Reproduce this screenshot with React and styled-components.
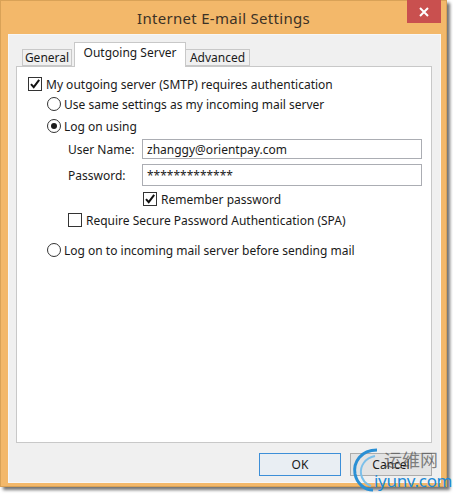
import React from "react";
import styled, { createGlobalStyle } from "styled-components";

const GlobalStyles = createGlobalStyle`
  * {
    box-sizing: border-box;
  }
  body {
    margin: 0;
    background: #ffffff;
    font-family: "Noto Sans", "Open Sans", sans-serif;
    font-size: 12px;
    color: #1a1a1a;
  }
`;

const Page = styled.div`
  position: relative;
  width: 453px;
  height: 498px;
`;

const Window = styled.div`
  display: flex;
  flex-direction: column;
  width: 447px;
  height: 487px;
  background: #f3b86a;
  border: 1px solid #d9a257;
  box-shadow: 3px 3px 3px rgba(0, 0, 0, 0.55);
`;

const TitleBar = styled.div`
  position: relative;
  height: 33px;
  display: flex;
  align-items: center;
  justify-content: center;
  font-size: 15px;
  color: #3c3226;
  letter-spacing: 0.3px;
`;

const CloseBtn = styled.div`
  position: absolute;
  top: -1px;
  right: 5px;
  width: 34px;
  height: 23px;
  background: #c9504f;
  display: flex;
  align-items: center;
  justify-content: center;
`;

const Client = styled.div`
  flex: 1;
  margin: 0 5px 3px 7px;
  background: #f0f0f0;
  border: 1px solid #f7f7f7;
  padding: 7px 8px 0 7px;
  display: flex;
  flex-direction: column;
`;

const TabStrip = styled.div`
  display: flex;
  align-items: flex-end;
  height: 24px;
  padding-left: 6px;
  position: relative;
  z-index: 1;
`;

const Tab = styled.div`
  width: ${(p) => p.$w}px;
  height: ${(p) => (p.$active ? "25px" : "17px")};
  margin: ${(p) => p.$m || "0"};
  margin-bottom: ${(p) => (p.$active ? "-1px" : "0")};
  background: ${(p) => (p.$active ? "#ffffff" : "#f0f0f0")};
  border: 1px solid #c8c8c8;
  border-bottom: ${(p) => (p.$active ? "none" : "1px solid #c8c8c8")};
  display: flex;
  justify-content: center;
  align-items: ${(p) => (p.$active ? "flex-start" : "center")};
  padding-top: ${(p) => (p.$active ? "2px" : "0")};
  line-height: 16px;
  position: relative;
  z-index: ${(p) => (p.$active ? 2 : 1)};
`;

const Panel = styled.div`
  height: 377px;
  background: #ffffff;
  border: 1px solid #c8c8c8;
  padding: 7px 0 0 11px;
  display: flex;
  flex-direction: column;
`;

const Row = styled.div`
  display: flex;
  align-items: center;
  height: ${(p) => p.$h || 20}px;
  padding-left: ${(p) => p.$indent || 0}px;
  margin-top: ${(p) => p.$mt || 0}px;
  white-space: nowrap;
`;

const Box = styled.span`
  width: 14px;
  height: 14px;
  border: 1px solid #333333;
  background: #ffffff;
  margin-right: 4px;
  display: flex;
  align-items: center;
  justify-content: center;
  flex-shrink: 0;
`;

const Radio = styled.span`
  width: 14px;
  height: 14px;
  border: 1px solid #333333;
  border-radius: 50%;
  background: #ffffff;
  margin-right: 3px;
  display: flex;
  align-items: center;
  justify-content: center;
  flex-shrink: 0;

  &::after {
    content: "";
    display: ${(p) => (p.$on ? "block" : "none")};
    width: 6px;
    height: 6px;
    border-radius: 50%;
    background: #1a1a1a;
  }
`;

const FieldLabel = styled.span`
  width: 74px;
`;

const Field = styled.div`
  width: 280px;
  height: ${(p) => p.$h || 20}px;
  border: 1px solid #abadb3;
  background: #ffffff;
  padding: 0 4px;
  display: flex;
  align-items: center;
`;

const Footer = styled.div`
  display: flex;
  justify-content: flex-end;
  gap: 9px;
  padding: 10px 0 0;
`;

const Button = styled.div`
  width: 82px;
  height: 23px;
  border: 1px solid ${(p) => (p.$focus ? "#3d8fd8" : "#acacac")};
  background: ${(p) => (p.$focus ? "#e9eef3" : "#e3e3e3")};
  display: flex;
  align-items: center;
  justify-content: center;
`;

const Watermark = styled.div`
  position: absolute;
  left: 351px;
  top: 446px;
  width: 100px;
  height: 50px;
  pointer-events: none;
`;

const WmCn = styled.span`
  position: absolute;
  left: 33px;
  top: 2px;
  font-family: "Noto Sans CJK SC", sans-serif;
  font-size: 18px;
  line-height: 22px;
  color: rgba(80, 80, 80, 0.7);
`;

const WmUrl = styled.span`
  position: absolute;
  left: 23px;
  top: 25px;
  font-family: "Noto Sans", sans-serif;
  font-size: 17px;
  line-height: 20px;
  letter-spacing: -0.3px;
  color: #1c8ad6;
`;

const Check = () => (
  <svg width="12" height="12" viewBox="0 0 12 12">
    <path d="M2 6.2 L4.7 9.2 L10.2 1.8" fill="none" stroke="#111" strokeWidth="2" />
  </svg>
);

export default function App() {
  return (
    <Page>
      <GlobalStyles />
      <Window>
        <TitleBar>
          Internet E-mail Settings
          <CloseBtn>
            <svg width="10" height="10" viewBox="0 0 10 10">
              <path d="M1 1 L9 9 M9 1 L1 9" stroke="#fff" strokeWidth="2" />
            </svg>
          </CloseBtn>
        </TitleBar>
        <Client>
          <TabStrip>
            <Tab $w={50} $m="0 2px 0 0">General</Tab>
            <Tab $w={112} $active>Outgoing Server</Tab>
            <Tab $w={65} $m="0 0 0 -1px">Advanced</Tab>
          </TabStrip>
          <Panel>
            <Row>
              <Box>
                <Check />
              </Box>
              My outgoing server (SMTP) requires authentication
            </Row>
            <Row $indent={19}>
              <Radio />
              Use same settings as my incoming mail server
            </Row>
            <Row $indent={19} $h={24}>
              <Radio $on />
              Log on using
            </Row>
            <Row $indent={40} $h={22}>
              <FieldLabel>User Name:</FieldLabel>
              <Field>zhanggy@orientpay.com</Field>
            </Row>
            <Row $indent={40} $h={22} $mt={4}>
              <FieldLabel>Password:</FieldLabel>
              <Field $h={22}>*************</Field>
            </Row>
            <Row $indent={115} $h={26}>
              <Box>
                <Check />
              </Box>
              Remember password
            </Row>
            <Row $indent={40} $h={16}>
              <Box />
              Require Secure Password Authentication (SPA)
            </Row>
            <Row $indent={19} $mt={12}>
              <Radio />
              Log on to incoming mail server before sending mail
            </Row>
          </Panel>
          <Footer>
            <Button $focus>OK</Button>
            <Button>Cancel</Button>
          </Footer>
        </Client>
      </Window>
      <Watermark>
        <svg width="34" height="46" viewBox="0 0 34 46">
          <path d="M26 4 C10 4 2 16 4 28 C6 38 14 44 22 44" fill="none" stroke="#2a8fd4" strokeWidth="3" />
          <path d="M24 10 C14 12 9 20 10 28 C11 34 15 38 20 40" fill="none" stroke="#7cc0ea" strokeWidth="2" />
        </svg>
        <WmCn>运维网</WmCn>
        <WmUrl>iyunv.com</WmUrl>
      </Watermark>
    </Page>
  );
}
